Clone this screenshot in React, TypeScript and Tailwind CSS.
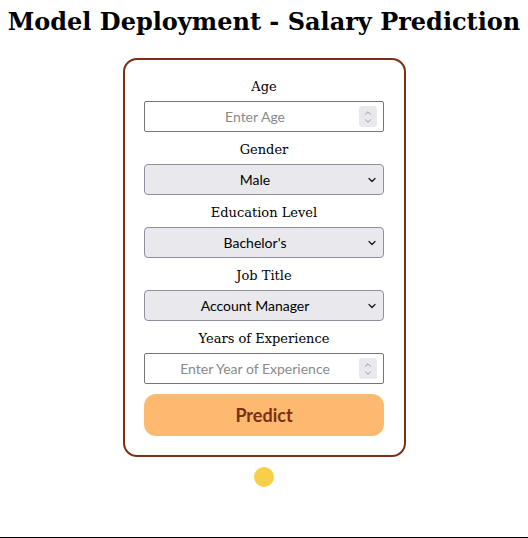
import { ChevronDown, ChevronUp } from "lucide-react";

const sans = "font-['Lato','Noto_Sans',sans-serif]";

const Label = ({ text }: { text: string }) => (
  <label className="mb-[5px] block h-[18px] text-center font-['DejaVu_Serif',serif] text-[13px] leading-[18px] text-black">
    {text}
  </label>
);

const NumberField = ({ placeholder }: { placeholder: string }) => (
  <div className="relative h-[31px] w-[240px]">
    <input
      type="text"
      placeholder={placeholder}
      className={`h-full w-full rounded-[2px] border border-[#767676] bg-white pl-2 pr-[26px] text-center text-[14px] text-black placeholder:text-[#8a8a8a] ${sans}`}
    />
    <span className="absolute right-[7px] top-[5px] flex h-[21px] w-[18px] flex-col items-center justify-center rounded-[3px] bg-[#e9e9ed] text-[#8a8a8a]">
      <ChevronUp size={10} strokeWidth={2} className="-mb-[1px]" />
      <ChevronDown size={10} strokeWidth={2} className="-mt-[1px]" />
    </span>
  </div>
);

const SelectField = ({ value, options }: { value: string; options: string[] }) => (
  <div className="relative h-[31px] w-[240px]">
    <select
      defaultValue={value}
      className={`h-full w-full appearance-none rounded-[4px] border border-[#8f8f9d] bg-[#e9e9ed] pl-2 pr-[26px] text-center text-[14px] text-black [text-align-last:center] ${sans}`}
    >
      {options.map((o) => (
        <option key={o}>{o}</option>
      ))}
    </select>
    <ChevronDown
      size={12}
      strokeWidth={2.5}
      className="pointer-events-none absolute right-[6px] top-[10px] text-[#1a1a1a]"
    />
  </div>
);

export default function App() {
  return (
    <div className="flex h-[538px] flex-col items-center border-b border-black bg-white">
      <h1 className="whitespace-nowrap pt-[6px] text-center font-['DejaVu_Serif',serif] text-[24px] font-bold leading-[32px] text-black">
        Model Deployment - Salary Prediction
      </h1>

      <form className="mt-[20px] flex w-[283px] flex-col items-center rounded-[14px] border-2 border-[#7b3014] px-[19px] pb-[19px] pt-[18px]">
        <Label text="Age" />
        <NumberField placeholder="Enter Age" />

        <div className="mt-[9px]" />
        <Label text="Gender" />
        <SelectField value="Male" options={["Male", "Female"]} />

        <div className="mt-[9px]" />
        <Label text="Education Level" />
        <SelectField value="Bachelor's" options={["Bachelor's", "Master's", "PhD"]} />

        <div className="mt-[9px]" />
        <Label text="Job Title" />
        <SelectField
          value="Account Manager"
          options={["Account Manager", "Data Analyst", "Software Engineer"]}
        />

        <div className="mt-[9px]" />
        <Label text="Years of Experience" />
        <NumberField placeholder="Enter Year of Experience" />

        <button
          type="button"
          className={`mt-[10px] h-[42px] w-[240px] rounded-[12px] bg-[#fdb96f] text-[18px] font-bold text-[#7b3014] ${sans}`}
        >
          Predict
        </button>
      </form>

      <div className="mt-[10px] h-[20px] w-[20px] rounded-full bg-[#f9cf4a]" />
    </div>
  );
}
